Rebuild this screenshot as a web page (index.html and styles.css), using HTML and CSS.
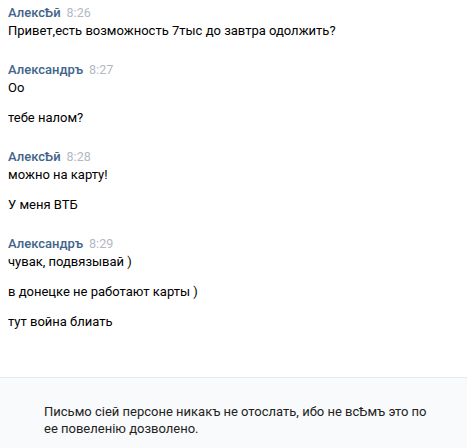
FILE: index.html
```html
<!DOCTYPE html>
<html lang="ru">
<head>
<meta charset="utf-8">
<link rel="stylesheet" href="styles.css">
</head>
<body>
<div class="page">
  <div class="history">
    <div class="group">
      <div class="head"><span class="name">АлексѢй</span><span class="time">8:26</span></div>
      <div class="msg">Привет,есть возможность 7тыс до завтра одолжить?</div>
    </div>
    <div class="group">
      <div class="head"><span class="name">Александръ</span><span class="time">8:27</span></div>
      <div class="msg">Оо</div>
      <div class="msg">тебе налом?</div>
    </div>
    <div class="group">
      <div class="head"><span class="name">АлексѢй</span><span class="time">8:28</span></div>
      <div class="msg">можно на карту!</div>
      <div class="msg">У меня ВТБ</div>
    </div>
    <div class="group">
      <div class="head"><span class="name">Александръ</span><span class="time">8:29</span></div>
      <div class="msg">чувак, подвязывай )</div>
      <div class="msg">в донецке не работают карты )</div>
      <div class="msg">тут война блиать</div>
    </div>
  </div>
  <div class="footer">
    <div class="notice">Письмо сіей персоне никакъ не отослать, ибо не всѢмъ это по ее повеленію дозволено.</div>
  </div>
</div>
</body>
</html>
```
FILE: styles.css
```css
html, body {
  margin: 0;
  padding: 0;
  background: #fff;
}
body {
  font-family: Roboto, "Open Sans", "DejaVu Sans", sans-serif;
  font-size: 13px;
  line-height: 18px;
  color: #000;
}
.page {
  width: 467px;
  height: 448px;
  display: flex;
  flex-direction: column;
}
.history {
  flex: 1;
  padding: 4px 8px 0 8px;
}
.group {
  margin-bottom: 21px;
}
.head {
  display: flex;
  align-items: baseline;
  gap: 6px;
}
.name {
  font-weight: 500;
  color: #42648b;
}
.time {
  color: #b2b9c2;
  font-size: 12.5px;
}
.msg + .msg {
  margin-top: 12px;
}
.footer {
  height: 71px;
  border-top: 1px solid #e7e8ec;
  background: #f9fafb;
  padding: 25px 30px 0 44px;
  box-sizing: border-box;
}
.notice {
  color: #222;
  line-height: 17px;
  width: 390px;
}
```
